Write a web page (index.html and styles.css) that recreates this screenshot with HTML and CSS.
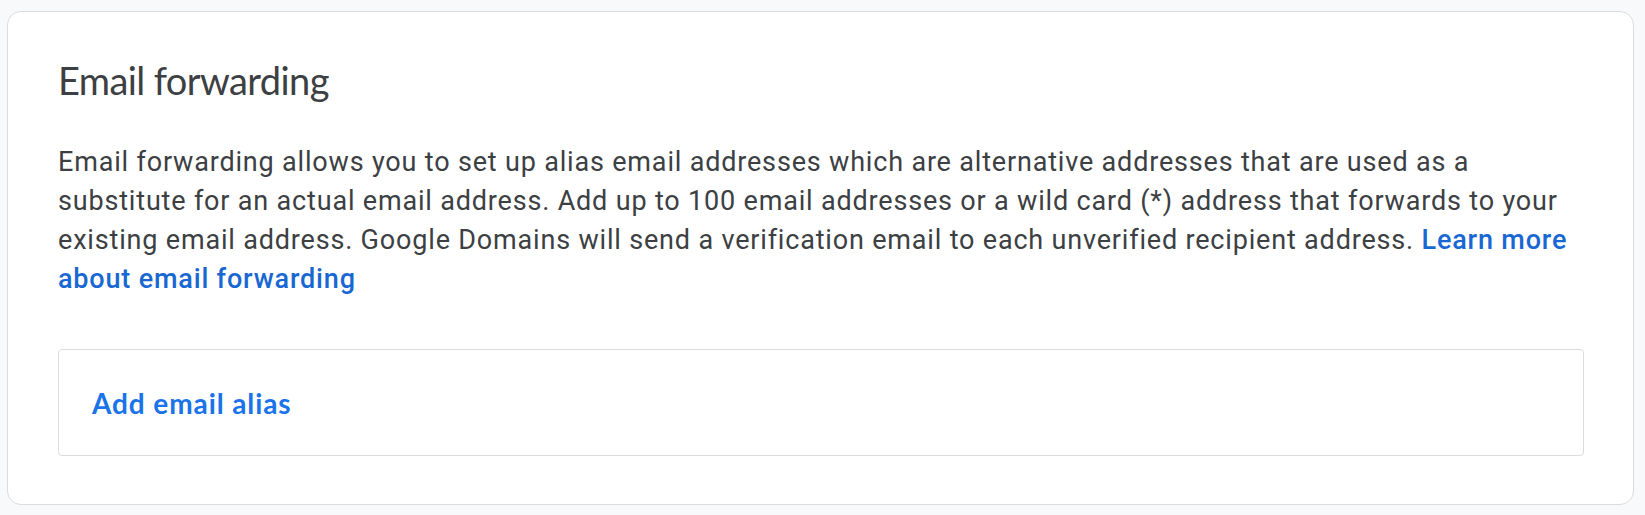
FILE: index.html
```html
<!DOCTYPE html>
<html lang="en">
<head>
<meta charset="utf-8">
<title>Email forwarding</title>
<link rel="stylesheet" href="styles.css">
</head>
<body>
<section class="card">
  <h2 class="card-title">Email forwarding</h2>
  <p class="card-text">Email forwarding allows you to set up alias email addresses which are alternative addresses that are used as a substitute for an actual email address. Add up to 100 email addresses or a wild card (*) address that forwards to your existing email address. Google Domains will send a verification email to each unverified recipient address. <a class="learn-link" href="#">Learn more about email forwarding</a></p>
  <div class="alias-box">
    <a class="alias-link" href="#">Add email alias</a>
  </div>
</section>
</body>
</html>
```
FILE: styles.css
```css
html, body {
  margin: 0;
  padding: 0;
  background: #f8f9fa;
}
body {
  padding: 11px 11px 10px 7px;
}
.card {
  background: #ffffff;
  border: 1px solid #dadce0;
  border-radius: 14px;
  padding: 44px 49px 48px 50px;
  display: flex;
  flex-direction: column;
}
.card-title {
  margin: 0;
  font-family: Lato, "Open Sans", sans-serif;
  font-weight: 400;
  font-size: 38px;
  line-height: 48px;
  letter-spacing: -0.6px;
  color: #3c4043;
}
.card-text {
  margin: 39px 0 0 0;
  font-family: Roboto, "Liberation Sans", sans-serif;
  font-size: 27px;
  line-height: 39px;
  letter-spacing: 0.82px;
  color: #3c4043;
}
.learn-link {
  color: #1967d2;
  font-weight: 500;
  text-decoration: none;
}
.alias-box {
  margin-top: 50px;
  border: 1px solid #dadce0;
  border-radius: 4px;
  padding: 0 33px;
  height: 105px;
  display: flex;
  align-items: center;
}
.alias-link {
  font-family: Lato, "Open Sans", sans-serif;
  font-weight: 700;
  font-size: 28px;
  letter-spacing: 0.9px;
  color: #1a73e8;
  text-decoration: none;
}
```
